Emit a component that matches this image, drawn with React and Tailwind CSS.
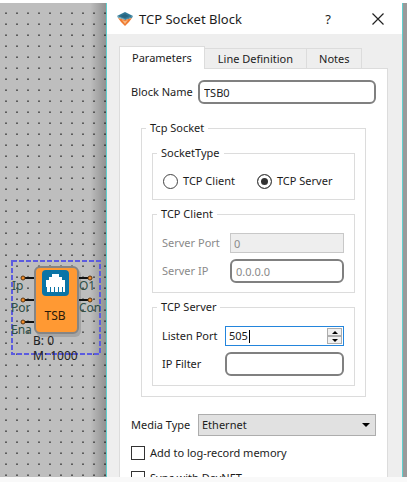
import { useState } from "react";

function Pin({ x, y, from, to }) {
  return (
    <g>
      <line x1={from} x2={to} y1={y} y2={y} stroke="#111" strokeWidth="2" />
      <circle cx={x} cy={y} r="2" fill="#f28c28" stroke="#5a3510" strokeWidth="1" />
    </g>
  );
}

function Canvas() {
  return (
    <section aria-label="Diagram" className="w-[106px] shrink-0 overflow-hidden bg-[#bebebe]">
      <svg width="106" height="1200" className="block font-['Noto_Sans',sans-serif] text-xs">
        <defs>
          <pattern id="grid" width="11" height="11" x="5" y="9" patternUnits="userSpaceOnUse">
            <rect width="2" height="1" fill="#858585" />
            <rect y="1" width="2" height="1" fill="#5c5c5c" />
          </pattern>
          <linearGradient id="edge">
            <stop offset="0" stopColor="#000" stopOpacity="0" />
            <stop offset="1" stopColor="#000" stopOpacity="0.24" />
          </linearGradient>
        </defs>
        <rect width="106" height="1200" fill="url(#grid)" />
        <rect x="90" width="16" height="1200" fill="url(#edge)" />
        <rect x="36" y="266" width="45" height="68" rx="6" fill="#888" opacity="0.45" />
        <rect x="12" y="258" width="88" height="93" fill="none" stroke="#5b5be0" strokeWidth="2" strokeDasharray="5 2" />
        <g fill="#2f4f45">
          <text x="12" y="287">Ip</text>
          <text x="11" y="309">Por</text>
          <text x="11" y="331">Ena</text>
          <text x="79" y="287">O1</text>
          <text x="79" y="309">Con</text>
        </g>
        <Pin x={23} y={275} from={25} to={35} />
        <Pin x={23} y={297} from={25} to={35} />
        <Pin x={23} y={319} from={25} to={35} />
        <Pin x={90} y={275} from={78} to={88} />
        <Pin x={90} y={297} from={78} to={88} />
        <rect x="35" y="264" width="43" height="66" rx="5" fill="#ff9933" stroke="#858585" strokeWidth="2" />
        <rect x="42" y="267" width="27" height="26" rx="4" fill="#0b74a6" />
        <path d="M46 289V277h3v-3h3v-3h7v3h3v3h3v12h-2v-5h-1v5h-3v-5h-1v5h-3v-5h-1v5h-3v-5h-1v5h-3v-5h-1v5z" fill="#fff" />
        <text x="55" y="317" textAnchor="middle" fill="#2a1a0a">TSB</text>
        <text x="33" y="342" fill="#222">B: 0</text>
        <text x="33" y="357" fill="#222">M: 1000</text>
      </svg>
    </section>
  );
}

function Logo() {
  return (
    <svg width="16" height="14" viewBox="0 0 16 14" aria-hidden="true" className="shrink-0">
      <path d="M0 4 8 0l8 4-8 4z" fill="#2f7896" />
      <path d="M3 4l5-2 4 2-4 2z" fill="#286580" />
      <path d="M0 4l8 3v1L1 6z" fill="#77a9b8" />
      <path d="M16 4L8 7v1l7-2z" fill="#4d8ca3" />
      <path d="M1 6l7 2 7-2-3 4-4 4-4-4z" fill="#ef7b32" />
      <path d="M5 8l3 1 3-1-3 4z" fill="#f8b77e" />
    </svg>
  );
}

function TitleBar() {
  return (
    <header className="flex h-[31px] shrink-0 items-center bg-white pr-[18px] pl-[10px] text-[13px]">
      <Logo />
      <h1 className="ml-[6px] flex-1 whitespace-nowrap">TCP Socket Block</h1>
      <button type="button" aria-label="Help" className="mr-[38px] w-3 leading-5">?</button>
      <button type="button" aria-label="Close">
        <svg width="12" height="12" viewBox="0 0 12 12" stroke="#222" strokeWidth="1.2">
          <path d="M.5.5l11 11M11.5.5l-11 11" />
        </svg>
      </button>
    </header>
  );
}

function Group({ title, className = "", children }) {
  return (
    <fieldset className={"min-w-0 border border-[#dcdcdc] px-1 " + className}>
      <legend className="h-4 px-1">{title}</legend>
      {children}
    </fieldset>
  );
}

const rounded = "h-6 w-full min-w-0 rounded-md border-2 border-[#808080] bg-white px-1 outline-none";

function Radio({ id, label, checked, onSelect }) {
  return (
    <label htmlFor={id} className="flex items-center gap-[5px]">
      <input
        id={id}
        type="radio"
        name="socket-type"
        checked={checked}
        onChange={onSelect}
        className="size-[15px] appearance-none rounded-full border border-[#444] bg-white checked:bg-[#333] checked:shadow-[inset_0_0_0_3px_white]"
      />
      {label}
    </label>
  );
}

function Check({ id, label }) {
  return (
    <div className="flex h-4 items-center gap-[5px]">
      <input id={id} type="checkbox" className="size-[14px] shrink-0 appearance-none border border-[#333] bg-white" />
      <label htmlFor={id}>{label}</label>
    </div>
  );
}

function Parameters() {
  const [type, setType] = useState("server");
  const [port, setPort] = useState(505);
  return (
    <div role="tabpanel" className="flex-1 border border-[#dcdcdc] bg-white px-[11px] pt-[11px]">
      <div className="flex items-center">
        <label htmlFor="name" className="w-[67px] shrink-0 whitespace-nowrap">Block Name</label>
        <input id="name" defaultValue="TSB0" className={rounded} />
      </div>

      <Group title="Tcp Socket" className="mx-[10px] mt-4">
        <div className="flex flex-col gap-[6px] px-[6px] pt-[9px] pb-[10px]">
          <Group title="SocketType">
            <div className="mt-3 mb-[10px] flex h-4 items-center gap-[22px] px-[6px]">
              <Radio id="client" label="TCP Client" checked={type === "client"} onSelect={() => setType("client")} />
              <Radio id="server" label="TCP Server" checked={type === "server"} onSelect={() => setType("server")} />
            </div>
          </Group>

          <Group title="TCP Client">
            <div className="flex flex-col gap-[6px] pt-[11px] pr-[6px] pb-[9px] pl-[5px] text-[#8a8a8a]">
              <div className="flex items-center">
                <label htmlFor="server-port" className="w-[68px] shrink-0">Server Port</label>
                <input id="server-port" disabled defaultValue="0" className="h-5 w-full min-w-0 border border-[#c8c8c8] bg-[#eee] px-[3px]" />
              </div>
              <div className="flex items-center">
                <label htmlFor="server-ip" className="w-[68px] shrink-0">Server IP</label>
                <input id="server-ip" disabled defaultValue="0.0.0.0" className={rounded} />
              </div>
            </div>
          </Group>

          <Group title="TCP Server">
            <div className="flex flex-col gap-[6px] pt-[11px] pr-[6px] pb-[9px] pl-[5px]">
              <div className="flex items-center">
                <label htmlFor="listen" className="w-[63px] shrink-0">Listen Port</label>
                <div className="relative flex h-5 flex-1 items-center border border-[#2385dc] bg-white pr-px pl-[3px]">
                  <input
                    id="listen"
                    inputMode="numeric"
                    value={port}
                    onChange={(e) => setPort(Number(e.target.value) || 0)}
                    className="w-full min-w-0 outline-none"
                  />
                  <span aria-hidden="true" className="absolute top-[3px] left-[23px] h-[13px] w-px bg-black" />
                  <div className="flex w-[15px] shrink-0 flex-col">
                    <button type="button" aria-label="Increase" onClick={() => setPort(port + 1)} className="flex h-2 items-center justify-center border border-[#adadad] bg-[#f0f0f0]">
                      <svg width="6" height="3" viewBox="0 0 6 3"><path d="M0 3l3-3 3 3z" /></svg>
                    </button>
                    <button type="button" aria-label="Decrease" onClick={() => setPort(port - 1)} className="flex h-2 items-center justify-center border border-[#adadad] bg-[#f0f0f0]">
                      <svg width="6" height="3" viewBox="0 0 6 3"><path d="M0 0l3 3 3-3z" /></svg>
                    </button>
                  </div>
                </div>
              </div>
              <div className="flex items-center">
                <label htmlFor="filter" className="w-[63px] shrink-0">IP Filter</label>
                <input id="filter" className={rounded} />
              </div>
            </div>
          </Group>
        </div>
      </Group>

      <div className="mt-[17px] flex items-center">
        <label htmlFor="media" className="w-[67px] shrink-0 whitespace-nowrap">Media Type</label>
        <div className="relative flex-1">
          <select id="media" className="block h-[22px] w-full appearance-none border border-[#adadad] bg-[#e1e1e1] px-[3px]">
            <option>Ethernet</option>
          </select>
          <svg width="8" height="4" viewBox="0 0 8 4" className="pointer-events-none absolute top-[9px] right-[6px]">
            <path d="M0 0h8L4 4z" />
          </svg>
        </div>
      </div>
      <div className="mt-[9px] flex flex-col gap-[9px]">
        <Check id="log" label="Add to log-record memory" />
        <Check id="devnet" label="Sync with DevNET" />
      </div>
    </div>
  );
}

export default function App() {
  return (
    <div className="flex h-screen flex-col overflow-hidden bg-white pt-[3px] font-['Noto_Sans',sans-serif] text-[11px] leading-4 text-[#1c1c1c]">
      <div className="flex min-h-0 flex-1 overflow-hidden">
        <Canvas />
        <main className="flex min-w-0 flex-1 flex-col border-x border-[#5fd0cf] bg-[#eee]">
          <TitleBar />
          <div className="flex flex-1 flex-col pt-3 pr-[14px] pl-3">
            <div role="tablist" className="flex items-end">
              <button type="button" role="tab" aria-selected="true" className="relative -mb-px h-[23px] border border-b-0 border-[#dcdcdc] bg-white px-3">Parameters</button>
              <button type="button" role="tab" aria-selected="false" className="h-5 border-t border-r border-[#dcdcdc] px-[13px]">Line Definition</button>
              <button type="button" role="tab" aria-selected="false" className="h-5 border-t border-r border-[#dcdcdc] px-3">Notes</button>
            </div>
            <Parameters />
          </div>
        </main>
        <div className="w-1 shrink-0 bg-[#9a9a9a]" />
      </div>
      <div className="h-[5px] shrink-0 bg-[#f9f9f9]" />
    </div>
  );
}
